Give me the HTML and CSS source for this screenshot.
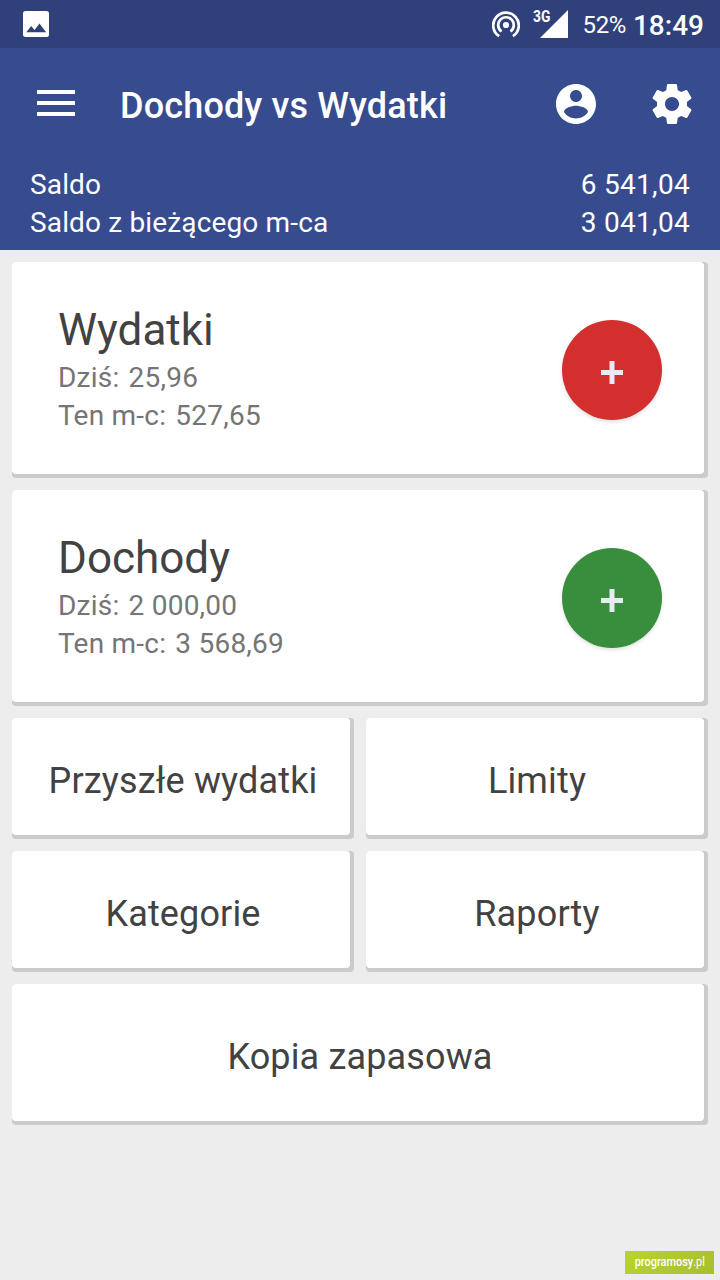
FILE: index.html
```html
<!DOCTYPE html>
<html lang="pl">
<head>
  <meta charset="UTF-8">
  <meta name="viewport" content="width=device-width, initial-scale=1">
  <title>Dochody vs Wydatki</title>
  <link rel="stylesheet" href="styles.css">
</head>
<body>

  <div class="status-bar">
    <svg class="icon-image" viewBox="0 0 26 26">
      <rect width="26" height="26" rx="2.500" fill="#fff"/>
      <path d="M3.3 21.3L8.2 15l3.3 4 5-6.400 6.600 8.700z" fill="#30407a"/>
    </svg>
    <div class="status-right">
      <svg class="icon-cast" viewBox="0 0 28 28">
        <circle cx="14" cy="14" r="3.1" fill="#fff"/>
        <path d="M9.6 20.5a7.8 7.8 0 1 1 8.8 0M7.1 25.2a12.8 12.8 0 1 1 13.8 0" fill="none" stroke="#fff" stroke-width="2.7"/>
      </svg>
      <div class="signal">
        <span class="network">3G</span>
        <svg class="icon-signal" viewBox="0 0 28 28"><path d="M28 0v28H0z" fill="#fff"/></svg>
      </div>
      <span class="battery">52%</span>
      <span class="clock">18:49</span>
    </div>
  </div>

  <header>
    <div class="toolbar">
      <svg class="icon-menu" viewBox="0 0 38 26"><path d="M0 0h38v4H0zM0 11h38v4H0zM0 22h38v4H0z" fill="#fff"/></svg>
      <h1>Dochody vs Wydatki</h1>
      <svg class="icon-user" viewBox="0 0 24 24">
        <path d="M12 2C6.48 2 2 6.48 2 12s4.48 10 10 10 10-4.48 10-10S17.52 2 12 2zm0 3c1.66 0 3 1.34 3 3s-1.34 3-3 3-3-1.34-3-3 1.34-3 3-3zm0 14.2c-2.5 0-4.71-1.28-6-3.22.03-1.99 4-3.08 6-3.08 1.99 0 5.97 1.09 6 3.08-1.29 1.94-3.5 3.22-6 3.22z" fill="#fff"/>
      </svg>
      <svg class="icon-settings" viewBox="0 0 24 24">
        <path d="M19.43 12.98c.04-.32.07-.64.07-.98s-.03-.66-.07-.98l2.11-1.65c.19-.15.24-.42.12-.64l-2-3.46c-.12-.22-.39-.3-.61-.22l-2.49 1c-.52-.4-1.08-.73-1.69-.98l-.38-2.65C14.46 2.18 14.25 2 14 2h-4c-.25 0-.46.18-.49.42l-.38 2.65c-.61.25-1.17.59-1.69.98l-2.49-1c-.23-.09-.49 0-.61.22l-2 3.46c-.13.22-.07.49.12.64l2.11 1.65c-.04.32-.07.65-.07.98s.03.66.07.98l-2.11 1.65c-.19.15-.24.42-.12.64l2 3.46c.12.22.39.3.61.22l2.49-1c.52.4 1.08.73 1.69.98l.38 2.65c.03.24.24.42.49.42h4c.25 0 .46-.18.49-.42l.38-2.65c.61-.25 1.17-.59 1.69-.98l2.49 1c.23.09.49 0 .61-.22l2-3.46c.12-.22.07-.49-.12-.64l-2.11-1.65zM12 15.5c-1.93 0-3.5-1.57-3.5-3.5s1.57-3.5 3.5-3.5 3.5 1.57 3.5 3.5-1.57 3.5-3.5 3.5z" fill="#fff"/>
      </svg>
    </div>
    <div class="balance">
      <div class="balance-row"><span>Saldo</span><span class="amount">6 541,04</span></div>
      <div class="balance-row"><span>Saldo z bieżącego m-ca</span><span class="amount">3 041,04</span></div>
    </div>
  </header>

  <main>
    <div class="card summary">
      <div class="card-inner">
        <div class="summary-text">
          <h2>Wydatki</h2>
          <p><span>Dziś:</span><span>25,96</span></p>
          <p><span>Ten m-c:</span><span>527,65</span></p>
        </div>
        <button class="add add-expense" aria-label="Wydatki">
          <svg viewBox="0 0 22 23"><path d="M8.500 0h5v9H22v5h-8.500v9h-5v-9H0V9h8.500z" fill="#e8eaf6"/></svg>
        </button>
      </div>
    </div>

    <div class="card summary">
      <div class="card-inner">
        <div class="summary-text">
          <h2>Dochody</h2>
          <p><span>Dziś:</span><span>2 000,00</span></p>
          <p><span>Ten m-c:</span><span>3 568,69</span></p>
        </div>
        <button class="add add-income" aria-label="Dochody">
          <svg viewBox="0 0 22 23"><path d="M8.500 0h5v9H22v5h-8.500v9h-5v-9H0V9h8.500z" fill="#e8eaf6"/></svg>
        </button>
      </div>
    </div>

    <div class="tiles">
      <div class="card tile"><div class="card-inner">Przyszłe wydatki</div></div>
      <div class="card tile"><div class="card-inner">Limity</div></div>
      <div class="card tile"><div class="card-inner">Kategorie</div></div>
      <div class="card tile"><div class="card-inner">Raporty</div></div>
      <div class="card tile tile-wide"><div class="card-inner">Kopia zapasowa</div></div>
    </div>
  </main>

  <div class="watermark"><span><b>programosy</b>.pl</span></div>

</body>
</html>
```
FILE: styles.css
```css
* {
  box-sizing: border-box;
}

body {
  margin: 0;
  min-height: 1280px;
  font-family: Roboto, sans-serif;
  background-color: #ededed;
  color: #424242;
}

h1, h2, p {
  margin: 0;
  font-weight: 400;
}

svg {
  display: block;
  flex: none;
}

/* status bar */
.status-bar {
  display: flex;
  justify-content: space-between;
  height: 48px;
  padding: 0 16px 0 23px;
  background-color: #30407a;
  color: #fff;
}

.icon-image {
  width: 26px;
  height: 26px;
  margin-top: 11px;
}

.status-right {
  display: flex;
  align-items: center;
}

.icon-cast {
  width: 28px;
  height: 28px;
  margin: 2px 13px 0 0;
}

.signal {
  display: flex;
  align-items: flex-start;
  height: 28px;
  margin-right: 15px;
}

.network {
  width: 19px;
  margin-right: -12px;
  font-size: 16px;
  line-height: 14px;
  font-weight: 700;
  transform: scaleX(.86);
  transform-origin: left;
}

.icon-signal {
  width: 28px;
  height: 28px;
}

.battery {
  margin-right: 7px;
  padding-top: 2px;
  font-size: 24px;
  letter-spacing: -0.4px;
}

.clock {
  padding-top: 2px;
  font-size: 28px;
  font-weight: 500;
}

/* header */
header {
  height: 202px;
  background-color: #374b8f;
  color: #fff;
}

.toolbar {
  display: flex;
  align-items: center;
  height: 112px;
  padding: 0 24px 0 37px;
}

.icon-menu {
  width: 38px;
  height: 26px;
  margin: 0 45px 2px 0;
}

h1 {
  flex: 1;
  padding-top: 4px;
  font-size: 36px;
  font-weight: 500;
  letter-spacing: 0.18px;
  white-space: nowrap;
}

.icon-user,
.icon-settings {
  width: 48px;
  height: 48px;
}

.icon-settings {
  margin-left: 48px;
}

.balance {
  padding: 6px 30px 0;
}

.balance-row {
  display: flex;
  justify-content: space-between;
  font-size: 28px;
  line-height: 38px;
  letter-spacing: 0.15px;
}

.amount {
  letter-spacing: 0.3px;
}

/* cards */
main {
  display: flex;
  flex-direction: column;
  gap: 12px;
  padding: 12px;
}

.card {
  display: flex;
  padding: 0 4px 4px 0;
  background-color: #cbcbcb;
  border-radius: 4px;
}

.card-inner {
  display: flex;
  flex: 1;
  align-items: center;
  background-color: #fff;
  border-radius: 4px;
}

.summary {
  height: 216px;
}

.summary .card-inner {
  justify-content: space-between;
  padding: 0 42px 0 46px;
}

.summary-text {
  padding-top: 3px;
}

.summary-text h2 {
  margin-bottom: 3px;
  font-size: 44px;
  line-height: 52px;
}

.summary-text p {
  display: flex;
  gap: 9px;
  font-size: 28px;
  line-height: 38px;
  letter-spacing: 0.24px;
  color: #757575;
}

.add {
  display: flex;
  align-items: center;
  justify-content: center;
  width: 100px;
  height: 100px;
  margin-top: 4px;
  padding: 4px 0 0;
  border: none;
  border-radius: 50%;
  box-shadow: 0 2px 4px rgba(0, 0, 0, 0.12);
}

.add svg {
  width: 22px;
  height: 23px;
}

.add-expense {
  background-color: #d32f2f;
}

.add-income {
  background-color: #388e3c;
}

.tiles {
  display: grid;
  grid-template-columns: 1fr 1fr;
  gap: 12px;
}

.tile {
  height: 121px;
  font-size: 36px;
  letter-spacing: 0.15px;
}

.tile .card-inner {
  justify-content: center;
  padding: 8px 0 0 4px;
}

.tile-wide {
  grid-column: span 2;
  height: 141px;
}

.watermark {
  position: absolute;
  left: 625px;
  top: 1251px;
  display: flex;
  justify-content: center;
  width: 89px;
  height: 23px;
  background: linear-gradient(135deg, #b9d332, #a9be2e);
  color: #fff;
  font-size: 13px;
  line-height: 22px;
}

.watermark span {
  transform: scaleX(.84);
}

.watermark b {
  font-weight: 500;
}
```
